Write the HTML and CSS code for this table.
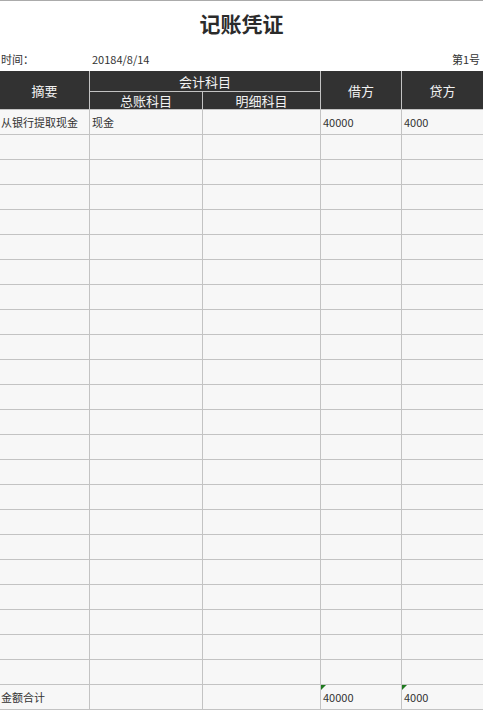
FILE: index.html
```html
<!DOCTYPE html>
<html lang="zh">
<head>
<meta charset="utf-8">
<title>记账凭证</title>
<link rel="stylesheet" href="styles.css">
</head>
<body>
<div class="page">
  <h1 class="title">记账凭证</h1>
  <div class="info">
    <span class="info-label">时间：</span>
    <span class="info-date">20184/8/14</span>
    <span class="info-no">第1号</span>
  </div>
  <div class="sheet">
    <div class="h h-zy">摘要</div>
    <div class="h h-kj">会计科目</div>
    <div class="h h-jf">借方</div>
    <div class="h h-df">贷方</div>
    <div class="h h-zz">总账科目</div>
    <div class="h h-mx">明细科目</div>

    <div class="c">从银行提取现金</div><div class="c">现金</div><div class="c"></div><div class="c">40000</div><div class="c">4000</div>

    <div class="c"></div><div class="c"></div><div class="c"></div><div class="c"></div><div class="c"></div>
    <div class="c"></div><div class="c"></div><div class="c"></div><div class="c"></div><div class="c"></div>
    <div class="c"></div><div class="c"></div><div class="c"></div><div class="c"></div><div class="c"></div>
    <div class="c"></div><div class="c"></div><div class="c"></div><div class="c"></div><div class="c"></div>
    <div class="c"></div><div class="c"></div><div class="c"></div><div class="c"></div><div class="c"></div>
    <div class="c"></div><div class="c"></div><div class="c"></div><div class="c"></div><div class="c"></div>
    <div class="c"></div><div class="c"></div><div class="c"></div><div class="c"></div><div class="c"></div>
    <div class="c"></div><div class="c"></div><div class="c"></div><div class="c"></div><div class="c"></div>
    <div class="c"></div><div class="c"></div><div class="c"></div><div class="c"></div><div class="c"></div>
    <div class="c"></div><div class="c"></div><div class="c"></div><div class="c"></div><div class="c"></div>
    <div class="c"></div><div class="c"></div><div class="c"></div><div class="c"></div><div class="c"></div>
    <div class="c"></div><div class="c"></div><div class="c"></div><div class="c"></div><div class="c"></div>
    <div class="c"></div><div class="c"></div><div class="c"></div><div class="c"></div><div class="c"></div>
    <div class="c"></div><div class="c"></div><div class="c"></div><div class="c"></div><div class="c"></div>
    <div class="c"></div><div class="c"></div><div class="c"></div><div class="c"></div><div class="c"></div>
    <div class="c"></div><div class="c"></div><div class="c"></div><div class="c"></div><div class="c"></div>
    <div class="c"></div><div class="c"></div><div class="c"></div><div class="c"></div><div class="c"></div>
    <div class="c"></div><div class="c"></div><div class="c"></div><div class="c"></div><div class="c"></div>
    <div class="c"></div><div class="c"></div><div class="c"></div><div class="c"></div><div class="c"></div>
    <div class="c"></div><div class="c"></div><div class="c"></div><div class="c"></div><div class="c"></div>
    <div class="c"></div><div class="c"></div><div class="c"></div><div class="c"></div><div class="c"></div>
    <div class="c"></div><div class="c"></div><div class="c"></div><div class="c"></div><div class="c"></div>

    <div class="c">金额合计</div><div class="c"></div><div class="c"></div><div class="c flag">40000</div><div class="c flag">4000</div>
  </div>
</div>
</body>
</html>
```

FILE: styles.css
```css
html, body {
  margin: 0;
  padding: 0;
  background: #ffffff;
}
body {
  font-family: "Noto Sans CJK SC", "Noto Sans", sans-serif;
  color: #333333;
  font-size: 11px;
}
.page {
  width: 483px;
  border-top: 1px solid #ababab;
}
.title {
  margin: 0;
  height: 46px;
  line-height: 44px;
  text-align: center;
  font-size: 21px;
  font-weight: bold;
  color: #2b2b2b;
}
.info {
  display: grid;
  grid-template-columns: 92px 1fr auto;
  height: 24px;
  align-items: center;
  font-size: 11px;
  color: #333;
}
.info-label { padding-left: 1px; }
.info-no { padding-right: 3px; }
.sheet {
  display: grid;
  grid-template-columns: 89px 112px 117px 80px 81px;
  grid-template-rows: 20px 17px repeat(24, 24px);
  gap: 1px;
  background: #c3c3c3;
  padding-bottom: 1px;
}
.h {
  background: #323232;
  color: #f2f2f2;
  font-size: 13px;
  display: flex;
  align-items: center;
  justify-content: center;
}
.h-zy { grid-column: 1; grid-row: 1 / span 2; }
.h-kj { grid-column: 2 / span 2; grid-row: 1; }
.h-jf { grid-column: 4; grid-row: 1 / span 2; }
.h-df { grid-column: 5; grid-row: 1 / span 2; }
.h-zz { grid-column: 2; grid-row: 2; }
.h-mx { grid-column: 3; grid-row: 2; }
.c {
  background: #f7f7f7;
  display: flex;
  align-items: center;
  padding-left: 2px;
  font-size: 11px;
  color: #333;
  white-space: nowrap;
  overflow: hidden;
}
.c:nth-child(5n+2) { padding-left: 1px; }
.flag { position: relative; }
.flag::before {
  content: "";
  position: absolute;
  left: 0;
  top: 0;
  border-top: 5px solid #1f7a1f;
  border-right: 5px solid transparent;
}
```
